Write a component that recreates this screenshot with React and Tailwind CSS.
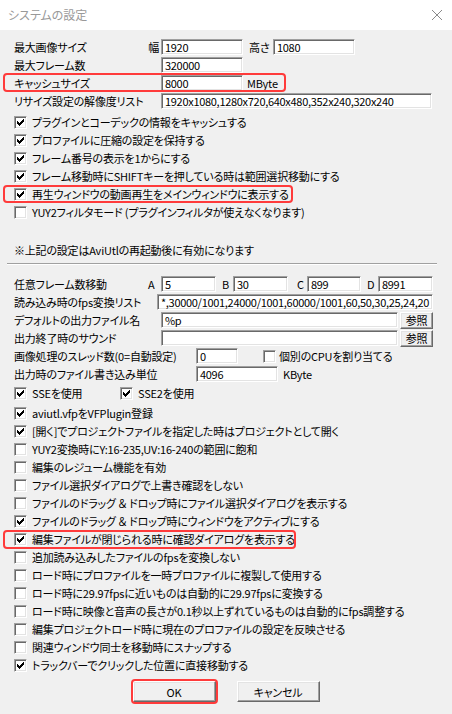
import React from 'react';

// Windows classic sunken / raised edges
const sunken =
    "border border-t-[#a0a0a0] border-l-[#a0a0a0] border-r-white border-b-white shadow-[inset_1px_1px_0_#696969,inset_-1px_-1px_0_#e3e3e3]";
const raised =
    "border border-t-white border-l-white border-r-[#696969] border-b-[#696969] shadow-[inset_-1px_-1px_0_#a0a0a0,inset_1px_1px_0_#e3e3e3]";

// classic 7x7 pixel check mark
const CheckMark = () => (
    <svg width="7" height="7" viewBox="0 0 7 7" shapeRendering="crispEdges">
        {[2, 3, 4, 3, 2, 1, 0].map((top, col) => (
            <rect key={col} x={col} y={top} width="1" height="3" fill="#000" />
        ))}
    </svg>
);

const Box = ({ checked }) => (
    <span className={`w-[13px] h-[13px] shrink-0 bg-white flex items-center justify-center ${sunken}`}>
        {checked && <CheckMark />}
    </span>
);

const Field = ({ value = "", className = "" }) => (
    <div
        className={`h-[16px] shrink-0 bg-white overflow-hidden whitespace-nowrap pl-[3px] text-[11px] leading-[14px] tracking-[-0.3px] ${sunken} ${className}`}
    >
        {value}
    </div>
);

const Button = ({ children, className = "" }) => (
    <div className={`shrink-0 flex items-center justify-center bg-[#f0f0f0] ${raised} ${className}`}>
        {children}
    </div>
);

// red annotation frame drawn over a row
const Mark = ({ className }) => (
    <span className={`pointer-events-none absolute rounded-[4px] border-2 border-[#ff3b3b] ${className}`} />
);

const CheckRow = ({ checked, label, children }) => (
    <div className="relative h-[18px] flex items-center">
        <Box checked={checked} />
        <span className="ml-[5px] whitespace-nowrap">{label}</span>
        {children}
    </div>
);

const topChecks = [
    { checked: true, label: "プラグインとコーデックの情報をキャッシュする" },
    { checked: true, label: "プロファイルに圧縮の設定を保持する" },
    { checked: true, label: "フレーム番号の表示を1からにする" },
    { checked: true, label: "フレーム移動時にSHIFTキーを押している時は範囲選択移動にする" },
    { checked: true, label: "再生ウィンドウの動画再生をメインウィンドウに表示する", mark: true },
    { checked: false, label: "YUY2フィルタモード (プラグインフィルタが使えなくなります)" },
];

const bottomChecks = [
    { checked: true, label: "aviutl.vfpをVFPlugin登録" },
    { checked: true, label: "[開く]でプロジェクトファイルを指定した時はプロジェクトとして開く" },
    { checked: false, label: "YUY2変換時にY:16-235,UV:16-240の範囲に飽和" },
    { checked: false, label: "編集のレジューム機能を有効" },
    { checked: false, label: "ファイル選択ダイアログで上書き確認をしない" },
    { checked: false, label: "ファイルのドラッグ ＆ ドロップ時にファイル選択ダイアログを表示する" },
    { checked: true, label: "ファイルのドラッグ ＆ ドロップ時にウィンドウをアクティブにする" },
    { checked: true, label: "編集ファイルが閉じられる時に確認ダイアログを表示する", mark: true },
    { checked: false, label: "追加読み込みしたファイルのfpsを変換しない" },
    { checked: false, label: "ロード時にプロファイルを一時プロファイルに複製して使用する" },
    { checked: false, label: "ロード時に29.97fpsに近いものは自動的に29.97fpsに変換する" },
    { checked: false, label: "ロード時に映像と音声の長さが0.1秒以上ずれているものは自動的にfps調整する" },
    { checked: false, label: "編集プロジェクトロード時に現在のプロファイルの設定を反映させる" },
    { checked: false, label: "関連ウィンドウ同士を移動時にスナップする" },
    { checked: true, label: "トラックバーでクリックした位置に直接移動する" },
];

const App = () => {
    return (
        <div className="w-[452px] h-[714px] bg-[#f0f0f0] overflow-hidden text-black text-[11px] leading-[18px] tracking-[-0.2px] font-['Noto_Sans_CJK_JP',sans-serif] [font-feature-settings:'palt']">
            {/* Title bar */}
            <div className="h-[30px] bg-white flex items-center justify-between pl-[8px] pr-[10px]">
                <span className="text-[12px] tracking-normal text-[#999999]">システムの設定</span>
                <svg width="10" height="10" viewBox="0 0 10 10">
                    <path d="M0 0L10 10M10 0L0 10" stroke="#8a8a8a" strokeWidth="1" />
                </svg>
            </div>

            <div className="pl-[14px] pt-[8px]">
                {/* Size settings */}
                <div className="h-[18px] flex items-center">
                    <div className="w-[147px] flex justify-between pr-[2px]">
                        <span>最大画像サイズ</span>
                        <span>幅</span>
                    </div>
                    <Field value="1920" className="w-[82px]" />
                    <span className="ml-[6px] w-[24px]">高さ</span>
                    <Field value="1080" className="w-[82px]" />
                </div>
                <div className="h-[18px] flex items-center">
                    <span className="w-[147px]">最大フレーム数</span>
                    <Field value="320000" className="w-[82px]" />
                </div>
                <div className="relative h-[18px] flex items-center">
                    <span className="w-[147px]">キャッシュサイズ</span>
                    <Field value="8000" className="w-[82px]" />
                    <span className="ml-[4px]">MByte</span>
                    <Mark className="-left-[11px] -top-[1px] w-[283px] h-[19px]" />
                </div>
                <div className="h-[18px] flex items-center">
                    <span className="w-[147px] whitespace-nowrap">リサイズ設定の解像度リスト</span>
                    <Field value="1920x1080,1280x720,640x480,352x240,320x240" className="w-[271px]" />
                </div>

                <div className="mt-[3px]">
                    {topChecks.map((c) => (
                        <CheckRow key={c.label} checked={c.checked} label={c.label}>
                            {c.mark && <Mark className="-left-[11px] top-0 w-[290px] h-[18px]" />}
                        </CheckRow>
                    ))}
                </div>

                <div className="mt-[20px] h-[18px] flex items-center">
                    ※上記の設定はAviUtlの再起動後に有効になります
                </div>

                {/* etched separator */}
                <div className="mt-[4px] -ml-[7px] w-[430px] border-t border-t-[#a0a0a0] border-b border-b-white" />

                {/* Second block */}
                <div className="mt-[10px] h-[18px] flex items-center">
                    <span className="w-[134px]">任意フレーム数移動</span>
                    <span className="w-[13px]">A</span>
                    <Field value="5" className="w-[55px]" />
                    <span className="ml-[6px] w-[11px]">B</span>
                    <Field value="30" className="w-[55px]" />
                    <span className="ml-[9px] w-[10px]">C</span>
                    <Field value="899" className="w-[54px]" />
                    <span className="ml-[6px] w-[11px]">D</span>
                    <Field value="8991" className="w-[55px]" />
                </div>
                <div className="h-[18px] flex items-center">
                    <span className="w-[143px] whitespace-nowrap">読み込み時のfps変換リスト</span>
                    <Field
                        value="*,30000/1001,24000/1001,60000/1001,60,50,30,25,24,20"
                        className="w-[276px]"
                    />
                </div>
                <div className="h-[18px] flex items-center">
                    <span className="w-[147px]">デフォルトの出力ファイル名</span>
                    <Field value="%p" className="w-[237px]" />
                    <Button className="ml-[2px] w-[33px] h-[17px]">参照</Button>
                </div>
                <div className="h-[18px] flex items-center">
                    <span className="w-[147px]">出力終了時のサウンド</span>
                    <Field className="w-[237px]" />
                    <Button className="ml-[2px] w-[33px] h-[17px]">参照</Button>
                </div>
                <div className="h-[18px] flex items-center">
                    <span className="w-[182px] whitespace-nowrap">画像処理のスレッド数(0=自動設定)</span>
                    <Field value="0" className="w-[42px]" />
                    <span className="ml-[25px]">
                        <Box checked={false} />
                    </span>
                    <span className="ml-[3px]">個別のCPUを割り当てる</span>
                </div>
                <div className="h-[18px] flex items-center">
                    <span className="w-[182px]">出力時のファイル書き込み単位</span>
                    <Field value="4096" className="w-[82px]" />
                    <span className="ml-[5px]">KByte</span>
                </div>

                <div className="mt-[1px] h-[18px] flex items-center">
                    <div className="w-[106px] flex items-center">
                        <Box checked />
                        <span className="ml-[5px]">SSEを使用</span>
                    </div>
                    <Box checked />
                    <span className="ml-[5px]">SSE2を使用</span>
                </div>

                <div className="mt-[2px]">
                    {bottomChecks.map((c) => (
                        <CheckRow key={c.label} checked={c.checked} label={c.label}>
                            {c.mark && <Mark className="-left-[11px] top-0 w-[293px] h-[19px]" />}
                        </CheckRow>
                    ))}
                </div>
            </div>

            {/* Dialog buttons */}
            <div className="mt-[7px] flex justify-center gap-[21px]">
                <div className="relative">
                    <Button className="w-[83px] h-[21px]">OK</Button>
                    <Mark className="-inset-[2px]" />
                </div>
                <Button className="w-[83px] h-[21px]">キャンセル</Button>
            </div>
        </div>
    );
};

export default App;
